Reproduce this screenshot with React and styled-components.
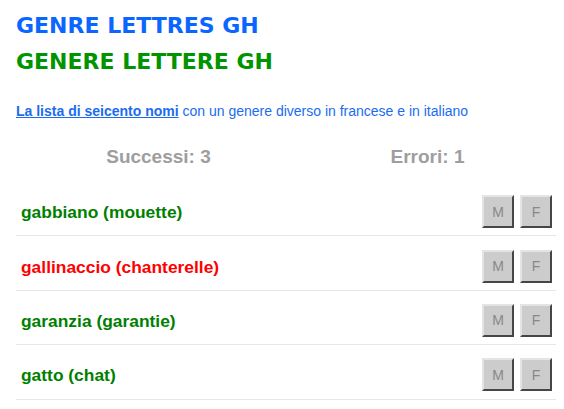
import React from 'react'
import styled, { createGlobalStyle } from 'styled-components'

const GlobalStyle = createGlobalStyle`
  body {
    margin: 0;
    background: #fff;
    font-family: 'Liberation Sans', Arial, sans-serif;
  }
`

const Page = styled.div`
  padding: 8px 8px 0 16px;
`

const Title = styled.h1`
  margin: 0;
  font-family: 'DejaVu Sans', sans-serif;
  font-weight: 700;
  font-size: 22px;
  line-height: 36px;
  color: ${p => p.color};
`

const Intro = styled.p`
  margin: 22px 0 0;
  font-size: 14px;
  color: #1a6cf0;
  line-height: 18px;
`

const IntroLink = styled.a`
  color: #1a6cf0;
  font-weight: 700;
  text-decoration: underline;
`

const Scores = styled.div`
  display: grid;
  grid-template-columns: 1fr 1fr;
  margin: 26px -6px 0 8px;
`

const Score = styled.div`
  text-align: center;
  font-size: 19px;
  font-weight: 700;
  color: #9e9e9e;
  line-height: 22px;
`

const List = styled.div`
  margin-top: 14px;
`

const Row = styled.div`
  display: flex;
  align-items: center;
  justify-content: space-between;
  height: 45.4px;
  padding: 8px 4px 0 5px;
  border-bottom: 1px solid #e6e6e6;
`

const Word = styled.span`
  font-size: 17.4px;
  font-weight: 700;
  color: ${p => (p.$wrong ? '#ff0000' : '#008000')};
`

const Buttons = styled.div`
  display: flex;
  gap: 6px;
  margin-top: -2px;
`

const GenderButton = styled.button`
  width: 32px;
  height: 33px;
  padding: 0;
  background: #cccccc;
  border: 2px outset #e4e4e4;
  border-right-color: #9a9a9a;
  border-bottom-color: #9a9a9a;
  color: #888888;
  font-family: 'Liberation Sans', Arial, sans-serif;
  font-size: 14px;
  cursor: pointer;
`

const words = [
  { text: 'gabbiano (mouette)' },
  { text: 'gallinaccio (chanterelle)', wrong: true },
  { text: 'garanzia (garantie)' },
  { text: 'gatto (chat)' }
]

const App = () => (
  <Page>
    <GlobalStyle />
    <Title color='#0a66ff'>GENRE LETTRES GH</Title>
    <Title color='#009400'>GENERE LETTERE GH</Title>
    <Intro>
      <IntroLink href='#'>La lista di seicento nomi</IntroLink> con un genere diverso in francese e in italiano
    </Intro>
    <Scores>
      <Score>Successi: 3</Score>
      <Score>Errori: 1</Score>
    </Scores>
    <List>
      {words.map(w => (
        <Row key={w.text}>
          <Word $wrong={w.wrong}>{w.text}</Word>
          <Buttons>
            <GenderButton>M</GenderButton>
            <GenderButton>F</GenderButton>
          </Buttons>
        </Row>
      ))}
    </List>
  </Page>
)

export default App
